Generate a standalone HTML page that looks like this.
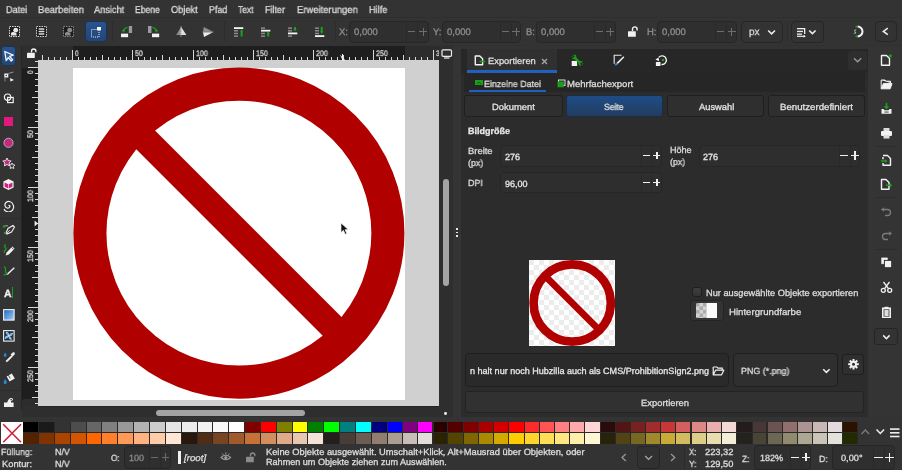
<!DOCTYPE html><html><head><meta charset="utf-8"><style>
html,body{margin:0;padding:0;}
body{text-rendering:geometricPrecision;width:902px;height:470px;overflow:hidden;position:relative;background:#333;font-family:"Liberation Sans",sans-serif;}
body>div,body>span,body>svg{position:absolute;}
span{white-space:pre;transform-origin:0 0;will-change:transform;-webkit-text-stroke:0.3px currentColor;}
</style></head><body>
<div style="left:0px;top:0px;width:902px;height:19px;background:#333333;"></div>
<span style="left:6.0px;top:6.00px;font-size:10px;line-height:10px;color:#dcdcdc;transform:scaleX(0.9142);">Datei</span>
<span style="left:37.9px;top:6.00px;font-size:10px;line-height:10px;color:#dcdcdc;transform:scaleX(0.9504);">Bearbeiten</span>
<span style="left:94.0px;top:6.00px;font-size:10px;line-height:10px;color:#dcdcdc;transform:scaleX(0.9207);">Ansicht</span>
<span style="left:134.9px;top:6.00px;font-size:10px;line-height:10px;color:#dcdcdc;transform:scaleX(0.8616);">Ebene</span>
<span style="left:171.2px;top:6.00px;font-size:10px;line-height:10px;color:#dcdcdc;transform:scaleX(0.9273);">Objekt</span>
<span style="left:209.0px;top:6.00px;font-size:10px;line-height:10px;color:#dcdcdc;transform:scaleX(0.8883);">Pfad</span>
<span style="left:238.3px;top:6.00px;font-size:10px;line-height:10px;color:#dcdcdc;transform:scaleX(0.8478);">Text</span>
<span style="left:265.2px;top:6.00px;font-size:10px;line-height:10px;color:#dcdcdc;transform:scaleX(0.8964);">Filter</span>
<span style="left:296.9px;top:6.00px;font-size:10px;line-height:10px;color:#dcdcdc;transform:scaleX(0.9442);">Erweiterungen</span>
<span style="left:368.8px;top:6.00px;font-size:10px;line-height:10px;color:#dcdcdc;transform:scaleX(0.9150);">Hilfe</span>
<div style="left:0px;top:19px;width:902px;height:26px;background:#333333;"></div>
<div style="left:0px;top:17px;width:902px;height:1px;background:#2f2f2f;"></div>
<div style="left:0px;top:45px;width:902px;height:1px;background:#313131;"></div>
<div style="left:0px;top:46px;width:21px;height:364px;background:#333333;"></div>
<div style="left:21px;top:46px;width:1px;height:364px;background:#262626;"></div>
<div style="left:22px;top:46px;width:15px;height:14px;background:#2e2e2e;"></div>
<div style="left:37px;top:46px;width:402px;height:14px;background:#2b2b2b;"></div>
<div style="left:72.5px;top:46px;width:332.5px;height:14px;background:#1d1d1d;"></div>
<div style="left:22px;top:60px;width:15px;height:346px;background:#2b2b2b;"></div>
<div style="left:22px;top:68px;width:15px;height:332px;background:#1d1d1d;"></div>
<div style="left:37px;top:60px;width:402px;height:346px;background:#d0d0d0;"></div>
<div style="left:72.8px;top:67.6px;width:332.5px;height:332px;background:#ffffff;"></div>
<svg style="left:37px;top:60px;" width="402" height="346" viewBox="0 0 402 346"><g transform="translate(201.9,173.15)"><circle r="149.0" fill="none" stroke="#b10000" stroke-width="33.1"/><rect x="-140" y="-13.25" width="280" height="26.5" fill="#b10000" transform="rotate(45) translate(-3.9,0)"/></g></svg>
<svg style="left:8.5px;top:25.8px;" width="11" height="11" viewBox="0 0 11 11"><rect x="0.5" y="0.5" width="10" height="10" fill="#1c1c1c" stroke="#e8e8e8" stroke-width="0.9" stroke-dasharray="1.6 0.9"/><circle cx="6.7" cy="4.2" r="2.4" fill="#e8e8e8"/><path d="M2 9.5 L2 7 Q3 5.6 5 6 L7.5 7.2 L7.5 9.5Z" fill="#e8e8e8"/></svg>
<svg style="left:36px;top:25.8px;" width="11" height="11" viewBox="0 0 11 11"><rect x="0.5" y="0.5" width="10" height="10" fill="#1c1c1c" stroke="#e0e0e0" stroke-width="0.9" stroke-dasharray="1.6 0.9"/><rect x="2.5" y="2.3" width="6" height="1.5" rx="0.7" fill="#ddd"/><rect x="2.5" y="4.8" width="6" height="1.5" rx="0.7" fill="#ddd"/><rect x="2.5" y="7.3" width="6" height="1.5" rx="0.7" fill="#ddd"/></svg>
<svg style="left:63px;top:25.8px;" width="11" height="11" viewBox="0 0 11 11"><rect x="0.5" y="0.5" width="10" height="10" fill="#1c1c1c" stroke="#8c8c8c" stroke-width="0.9" stroke-dasharray="1.6 0.9"/><circle cx="6.7" cy="4.2" r="2.4" fill="#8c8c8c"/><path d="M2 9.5 L2 7 Q3 5.6 5 6 L7.5 7.2 L7.5 9.5Z" fill="#8c8c8c"/></svg>
<div style="left:84.5px;top:21px;width:22.8px;height:21px;background:linear-gradient(#29548f,#224679);border-radius:3.5px;border:1px solid #1d3352;box-sizing:border-box;"></div>
<svg style="left:90px;top:26px;" width="13" height="12" viewBox="0 0 13 12"><rect x="1.5" y="3.5" width="7.5" height="7.5" fill="none" stroke="#e8e8e8" stroke-width="1" stroke-dasharray="1 1"/><rect x="7" y="1" width="4" height="3.4" fill="#fff"/></svg>
<div style="left:111.5px;top:21px;width:1px;height:21px;background:#2d2d2d;"></div>
<svg style="left:120px;top:25px;" width="13" height="13" viewBox="0 0 13 13"><rect x="8.8" y="1" width="3.3" height="7" fill="#9a9a9a"/><rect x="1" y="8.6" width="7.1" height="3.6" fill="#f2f2f2"/><path d="M7.7 2.4 Q4.5 2.8 3.5 5.6" fill="none" stroke="#1aa01a" stroke-width="1.4"/><path d="M1.8 5 L5.6 5.2 L3.2 7.4Z" fill="#1aa01a"/></svg>
<svg style="left:147px;top:25px;" width="13" height="13" viewBox="0 0 13 13"><rect x="1" y="1" width="3.5" height="7" fill="#9a9a9a"/><rect x="5" y="8.6" width="7.2" height="3.6" fill="#f2f2f2"/><path d="M5.3 2.4 Q8.5 2.8 9.5 5.6" fill="none" stroke="#1aa01a" stroke-width="1.4"/><path d="M11.2 5 L7.4 5.2 L9.8 7.4Z" fill="#1aa01a"/></svg>
<svg style="left:175px;top:26px;" width="13" height="12" viewBox="0 0 13 12"><path d="M1.2 9 L6 1 L6 9Z" fill="#8e8e8e"/><path d="M6.2 9 L6.2 1 L11.4 9Z" fill="#e0e0e0"/><path d="M6 0.5 V11" stroke="#fff" stroke-width="0.8" stroke-dasharray="1 0.8"/></svg>
<svg style="left:202px;top:26px;" width="13" height="12" viewBox="0 0 13 12"><path d="M1 5.8 L11 5.8 L1.8 1Z" fill="#8e8e8e"/><path d="M1 6.2 L11 6.2 L2 11Z" fill="#ededed"/><path d="M0.5 6 H11.5" stroke="#aaa" stroke-width="0.6"/></svg>
<div style="left:223.5px;top:21px;width:1px;height:21px;background:#2d2d2d;"></div>
<svg style="left:233.9px;top:26px;" width="11" height="11" viewBox="0 0 11 11"><rect x="0" y="1.2" width="9.3" height="1.8" fill="#f4f4f4"/><rect x="0" y="4.0" width="4" height="1.5" fill="#8a8a8a"/><rect x="0" y="6.7" width="4" height="1.5" fill="#8a8a8a"/><rect x="0" y="9.4" width="4" height="1.5" fill="#8a8a8a"/><path d="M7.6 3.4 L9.4 5.6 L8.6 5.6 L8.6 10.4 L6.6 10.4 L6.6 5.6 L5.8 5.6Z" fill="#1aa01a"/></svg>
<svg style="left:261px;top:26px;" width="11" height="11" viewBox="0 0 11 11"><rect x="0" y="1.4" width="4" height="1.5" fill="#8a8a8a"/><rect x="0" y="3.8" width="9.3" height="1.8" fill="#f4f4f4"/><rect x="0" y="6.7" width="4" height="1.5" fill="#8a8a8a"/><rect x="0" y="9.4" width="4" height="1.5" fill="#8a8a8a"/><path d="M7.2 5.6 L9.0 7.8 L8.2 7.8 L8.2 10.4 L6.2 10.4 L6.2 7.8 L5.4 7.8Z" fill="#1aa01a"/></svg>
<svg style="left:288.2px;top:26px;" width="11" height="11" viewBox="0 0 11 11"><rect x="0" y="1.4" width="4" height="1.5" fill="#8a8a8a"/><rect x="0" y="4.0" width="4" height="1.5" fill="#8a8a8a"/><rect x="0" y="6.5" width="9.3" height="1.8" fill="#f4f4f4"/><rect x="0" y="9.4" width="4" height="1.5" fill="#8a8a8a"/><path d="M7.0 5.2 L8.8 3.0 L8.0 3.0 L8.0 1 L6.0 1 L6.0 3.0 L5.2 3.0Z" fill="#1aa01a"/></svg>
<svg style="left:315.3px;top:26px;" width="11" height="11" viewBox="0 0 11 11"><rect x="0" y="1.4" width="4" height="1.5" fill="#8a8a8a"/><rect x="0" y="4.0" width="4" height="1.5" fill="#8a8a8a"/><rect x="0" y="6.7" width="4" height="1.5" fill="#8a8a8a"/><rect x="0" y="9.200000000000001" width="9.3" height="1.8" fill="#f4f4f4"/><path d="M6.7 7.8 L8.5 5.6 L7.7 5.6 L7.7 1 L5.7 1 L5.7 5.6 L4.9 5.6Z" fill="#1aa01a"/></svg>
<div style="left:334.7px;top:21px;width:1px;height:21px;background:#2d2d2d;"></div>
<span style="left:339.0px;top:28.00px;font-size:9.5px;line-height:9.5px;color:#8e8e8e;">X:</span>
<div style="left:348.8px;top:20.5px;width:80.2px;height:22.0px;background:#2f2f2f;border:1px solid #272727;box-sizing:border-box;border-radius:4px;"></div>
<div style="left:406.3px;top:21.5px;width:1px;height:20.0px;background:#2a2a2a;"></div>
<div style="left:417.3px;top:21.5px;width:1px;height:20.0px;background:#2a2a2a;"></div>
<span style="left:353.8px;top:28.00px;font-size:9.5px;line-height:9.5px;color:#8e8e8e;">0,000</span>
<div style="left:408.3px;top:31.2px;width:7.0px;height:1.0px;background:#6e6e6e;"></div>
<div style="left:419.15px;top:31.2px;width:8.0px;height:1.0px;background:#6e6e6e;"></div>
<div style="left:422.65px;top:27.6px;width:1.0px;height:8.2px;background:#6e6e6e;"></div>
<span style="left:432.8px;top:28.00px;font-size:9.5px;line-height:9.5px;color:#8e8e8e;">Y:</span>
<div style="left:442px;top:20.5px;width:79.4px;height:22.0px;background:#2f2f2f;border:1px solid #272727;box-sizing:border-box;border-radius:4px;"></div>
<div style="left:499.7px;top:21.5px;width:1px;height:20.0px;background:#2a2a2a;"></div>
<div style="left:510.6px;top:21.5px;width:1px;height:20.0px;background:#2a2a2a;"></div>
<span style="left:447.0px;top:28.00px;font-size:9.5px;line-height:9.5px;color:#8e8e8e;">0,000</span>
<div style="left:501.7px;top:31.2px;width:6.9px;height:1.0px;background:#6e6e6e;"></div>
<div style="left:512.0px;top:31.2px;width:8.0px;height:1.0px;background:#6e6e6e;"></div>
<div style="left:515.5px;top:27.6px;width:1.0px;height:8.2px;background:#6e6e6e;"></div>
<span style="left:526.0px;top:28.00px;font-size:9.5px;line-height:9.5px;color:#8e8e8e;">B:</span>
<div style="left:535.5px;top:20.5px;width:80.1px;height:22.0px;background:#2f2f2f;border:1px solid #272727;box-sizing:border-box;border-radius:4px;"></div>
<div style="left:594px;top:21.5px;width:1px;height:20.0px;background:#2a2a2a;"></div>
<div style="left:605px;top:21.5px;width:1px;height:20.0px;background:#2a2a2a;"></div>
<span style="left:540.5px;top:28.00px;font-size:9.5px;line-height:9.5px;color:#8e8e8e;">0,000</span>
<div style="left:596px;top:31.2px;width:7px;height:1.0px;background:#6e6e6e;"></div>
<div style="left:606.3px;top:31.2px;width:8.0px;height:1.0px;background:#6e6e6e;"></div>
<div style="left:609.8px;top:27.6px;width:1.0px;height:8.2px;background:#6e6e6e;"></div>
<svg style="left:627px;top:26px;" width="11" height="12" viewBox="0 0 11 12"><path d="M5.5 5 V3.2 A2.3 2.3 0 0 1 10.1 3.2 V4.4" fill="none" stroke="#f2f2f2" stroke-width="1.4"/><rect x="1" y="5.2" width="7.8" height="5.5" rx="0.5" fill="#f2f2f2"/></svg>
<span style="left:646.7px;top:28.00px;font-size:9.5px;line-height:9.5px;color:#8e8e8e;">H:</span>
<div style="left:657.3px;top:20.5px;width:80.2px;height:22.0px;background:#2f2f2f;border:1px solid #272727;box-sizing:border-box;border-radius:4px;"></div>
<div style="left:715px;top:21.5px;width:1px;height:20.0px;background:#2a2a2a;"></div>
<div style="left:726.2px;top:21.5px;width:1px;height:20.0px;background:#2a2a2a;"></div>
<span style="left:662.3px;top:28.00px;font-size:9.5px;line-height:9.5px;color:#8e8e8e;">0,000</span>
<div style="left:717px;top:31.2px;width:7.2px;height:1.0px;background:#6e6e6e;"></div>
<div style="left:727.85px;top:31.2px;width:8.0px;height:1.0px;background:#6e6e6e;"></div>
<div style="left:731.35px;top:27.6px;width:1.0px;height:8.2px;background:#6e6e6e;"></div>
<div style="left:741.3px;top:20.5px;width:41.5px;height:22.0px;background:#333;border:1px solid #262626;box-sizing:border-box;border-radius:4px;"></div>
<span style="left:748.7px;top:28.00px;font-size:10px;line-height:10px;color:#d8d8d8;">px</span>
<svg style="left:767px;top:29px;" width="10" height="7" viewBox="0 0 10 7"><path d="M1.2 1.5 L4.6 4.8 L8 1.5" fill="none" stroke="#eee" stroke-width="1.6"/></svg>
<div style="left:787px;top:21px;width:1px;height:21px;background:#2d2d2d;"></div>
<div style="left:790.7px;top:20.5px;width:33.3px;height:22.0px;background:#333;border:1px solid #262626;box-sizing:border-box;border-radius:4px;"></div>
<svg style="left:796px;top:27px;" width="11" height="11" viewBox="0 0 11 11"><rect x="1" y="1" width="7" height="1.3" fill="#eee"/><rect x="1" y="3.8" width="6" height="1.3" fill="#eee"/><rect x="1" y="6.5" width="5" height="1.3" fill="#eee"/><path d="M1 9.3 H8.8" stroke="#eee" stroke-width="1.2"/><path d="M7.6 7.8 L9.8 9.3 L7.6 10.8Z" fill="#eee"/><rect x="8" y="1" width="1.3" height="6" fill="#eee"/></svg>
<svg style="left:808px;top:29px;" width="10" height="7" viewBox="0 0 10 7"><path d="M1.2 1.5 L4.4 4.6 L7.6 1.5" fill="none" stroke="#eee" stroke-width="1.6"/></svg>
<svg style="left:851px;top:25px;" width="14" height="13" viewBox="0 0 14 13"><path d="M6.6 1.6 A4.9 4.9 0 1 1 6.6 11.4" fill="none" stroke="#f4f4f4" stroke-width="2"/><circle cx="5.4" cy="1.8" r="1" fill="#1aa01a"/><circle cx="5.4" cy="11.2" r="1" fill="#1aa01a"/><path d="M5.2 4.8 Q3.2 5 3.6 6.3 Q5 7 4.6 8.2 Q3.5 8.6 2.8 8" fill="none" stroke="#ccc" stroke-width="0.9"/></svg>
<div style="left:874.5px;top:20.5px;width:22.8px;height:21.9px;background:#333;border:1px solid #262626;box-sizing:border-box;border-radius:4px;"></div>
<svg style="left:881px;top:27px;" width="9" height="9" viewBox="0 0 9 9"><path d="M6.8 1.2 L2.4 4.4 L6.8 7.6" fill="none" stroke="#eee" stroke-width="1.6"/></svg>
<div style="left:1.4px;top:45.7px;width:14.7px;height:20.4px;background:linear-gradient(#29548f,#224679);border-radius:3.5px;border:1px solid #1d3352;box-sizing:border-box;"></div>
<svg style="left:3px;top:50px;" width="12" height="12" viewBox="0 0 12 12"><path d="M1.8 1.5 L10.2 5.2 L6.6 6.4 L9.6 9.8 L8.2 11 L5.3 7.6 L3.2 10.6Z" fill="#2a5fa8" stroke="#f4f4f4" stroke-width="1.3" stroke-linejoin="round"/></svg>
<svg style="left:3px;top:71px;" width="12" height="12" viewBox="0 0 12 12"><rect x="1.3" y="2.5" width="4" height="4" fill="#f0f0f0"/><rect x="2.7" y="3.9" width="1.2" height="1.2" fill="#333"/><path d="M5.3 2.5 L10.5 1" stroke="#aaa" stroke-width="0.8"/><path d="M2 6.5 V10.5" stroke="#999" stroke-width="0.8"/><path d="M7 7 L11 9 L7.4 10.6Z" fill="#f0f0f0"/></svg>
<svg style="left:3px;top:92px;" width="12" height="12" viewBox="0 0 12 12"><circle cx="4.6" cy="5.2" r="3.2" fill="none" stroke="#f0f0f0" stroke-width="1.2"/><rect x="4.6" y="5.4" width="5.6" height="5.2" fill="none" stroke="#f0f0f0" stroke-width="1.2"/></svg>
<div style="left:3.8px;top:116.8px;width:9.0px;height:9.2px;background:#e0197d;"></div>
<svg style="left:3px;top:137px;" width="12" height="12" viewBox="0 0 12 12"><circle cx="5.5" cy="5.8" r="4.6" fill="#c02a80" stroke="#e8e8e8" stroke-width="0.6"/></svg>
<svg style="left:2px;top:157px;" width="14" height="13" viewBox="0 0 14 13"><path d="M5 1 L6.3 3.6 L9.2 4 L7.1 6 L7.6 8.9 L5 7.5 L2.4 8.9 L2.9 6 L0.8 4 L3.7 3.6Z" fill="#c02a80" stroke="#eee" stroke-width="0.9"/><path d="M10 6 L10.9 7.8 L12.9 8.1 L11.4 9.5 L11.8 11.5 L10 10.6 L8.2 11.5 L8.6 9.5 L7.1 8.1 L9.1 7.8Z" fill="#333" stroke="#eee" stroke-width="0.9"/></svg>
<svg style="left:2px;top:178px;" width="13" height="13" viewBox="0 0 13 13"><path d="M6.5 1 L11.6 3.6 L11.6 9.4 L6.5 12 L1.4 9.4 L1.4 3.6Z" fill="#f2f2f2"/><path d="M2.6 4.4 L6.2 6.2 L6.2 10.6 L2.6 8.8Z" fill="#e0197d"/><path d="M10.4 4.4 L6.8 6.2 L6.8 10.6 L10.4 8.8Z" fill="#c02a80"/></svg>
<svg style="left:2px;top:199px;" width="13" height="13" viewBox="0 0 13 13"><path d="M6.5 6.5 A1.2 1.2 0 0 1 8 7 A2.2 2.2 0 0 1 5 9 A3.3 3.3 0 0 1 4 3.5 A4.5 4.5 0 0 1 11.2 6 A5 5 0 0 1 2 10" fill="none" stroke="#eee" stroke-width="1.2"/></svg>
<div style="left:0px;top:218px;width:21px;height:1px;background:#2d2d2d;"></div>
<svg style="left:2px;top:223px;" width="14" height="13" viewBox="0 0 14 13"><path d="M4 10 L6 5.5 L11 2.5 L12.5 4 L9.5 9 L5 11Z" fill="none" stroke="#eee" stroke-width="1.1"/><path d="M4.5 10.5 L8 7" stroke="#eee" stroke-width="0.8"/><path d="M2 3.5 Q4 2 6 3" fill="none" stroke="#bbb" stroke-width="0.8"/><circle cx="2" cy="3.5" r="1.2" fill="#1aa01a"/><circle cx="3" cy="10" r="1.2" fill="#1aa01a"/></svg>
<svg style="left:2px;top:243px;" width="14" height="13" viewBox="0 0 14 13"><path d="M4.6 9.4 L10.4 3.6 L12.6 5.8 L6.8 11.6 L3.6 12.6Z" fill="#f0f0f0"/><path d="M9.6 4.4 L11.8 6.6" stroke="#333" stroke-width="0.8"/><path d="M3.6 1.5 Q1.6 3.2 3.4 4.6 Q5 6 2.6 7.6 Q1.6 8.6 2.6 9.8" fill="none" stroke="#1aa01a" stroke-width="1.3"/></svg>
<svg style="left:2px;top:264px;" width="14" height="13" viewBox="0 0 14 13"><path d="M5.2 9.6 L11.8 3.2 L12.8 4.2 L6.2 10.6Z" fill="#eee"/><path d="M4.2 11 L5.2 9.6 L6.2 10.6Z" fill="#eee"/><path d="M2.2 2.4 Q4.4 4.4 3.6 6.6 Q2.8 8.6 5 9.4" fill="none" stroke="#1aa01a" stroke-width="1.3"/><path d="M1.6 11.2 L4.4 10.2" stroke="#1aa01a" stroke-width="1.3"/></svg>
<span style="left:3.5px;top:289.00px;font-size:10.5px;line-height:10.5px;color:#f2f2f2;font-weight:bold;transform:scaleX(0.9868);">A</span>
<div style="left:12px;top:287px;width:1.4px;height:11px;background:#1aa01a;"></div>
<svg style="left:3px;top:309px;" width="12" height="12" viewBox="0 0 12 12"><defs><linearGradient id="g1" x1="0" y1="0" x2="1" y2="1"><stop offset="0" stop-color="#1e63b8"/><stop offset="1" stop-color="#9fd0ff"/></linearGradient></defs><rect x="0.6" y="0.6" width="10.5" height="10.5" fill="url(#g1)" stroke="#f0f0f0" stroke-width="1.1"/></svg>
<svg style="left:3px;top:330px;" width="12" height="12" viewBox="0 0 12 12"><rect x="0.6" y="0.6" width="10.5" height="10.5" fill="#243444" stroke="#f0f0f0" stroke-width="1.1"/><path d="M5.8 5.8 Q3 4.5 3.2 2 Q6 2.2 5.8 5.8 Q7.2 3 9.6 3.2 Q9.6 6 5.8 5.8 Q8.6 7.2 8.4 9.6 Q5.6 9.6 5.8 5.8 Q4.4 8.6 2 8.4 Q2 5.6 5.8 5.8Z" fill="#3a9ae8" stroke="#e8f4ff" stroke-width="0.6"/></svg>
<svg style="left:2px;top:351px;" width="14" height="13" viewBox="0 0 14 13"><path d="M3.8 11.2 L4.4 9.2 L9.4 4.2 L10.8 5.6 L5.8 10.6Z" fill="#f0f0f0"/><path d="M8.6 3.4 L10.6 1.4 Q11.8 0.8 12.6 1.6 Q13.2 2.4 12.6 3.4 L10.6 5.4Z" fill="#f0f0f0"/><path d="M3.2 1.6 Q1.2 4.2 2 5.2 Q3.2 6.2 4.4 5.2 Q5 4.2 3.2 1.6Z" fill="#1e8fe0"/></svg>
<svg style="left:2px;top:372px;" width="14" height="13" viewBox="0 0 14 13"><path d="M4.6 4.4 L9.8 1.6 L12.8 6.6 L7.6 9.6Z" fill="#f2f2f2"/><path d="M6.4 3.2 L8.2 6.4" stroke="#333" stroke-width="0.9"/><path d="M3.2 7 Q0.9 10 2 11.4 Q3.2 12.4 4.4 11.4 Q5.4 10 3.2 7Z" fill="#1e8fe0"/></svg>
<div style="left:0px;top:390px;width:21px;height:1px;background:#2d2d2d;"></div>
<svg style="left:3px;top:396px;" width="12" height="12" viewBox="0 0 12 12"><path d="M1 6.5 L4.2 6.5 Q5.5 2 8.2 2 Q10.5 2.2 10 4 L8 5 L8 6.5 L10.6 6.5 L10.6 11 L1 11Z" fill="#f0f0f0"/><path d="M7.2 3.8 L9 3.4" stroke="#333" stroke-width="0.9"/></svg>
<div style="left:22px;top:46px;width:15.5px;height:14px;background:#2e2e2e;"></div>
<svg style="left:26px;top:47.5px;" width="11" height="11" viewBox="0 0 11 11"><path d="M5.5 4.5 V3.2 A2.2 2.2 0 0 1 9.9 3.2 V4.2" fill="none" stroke="#f2f2f2" stroke-width="1.3"/><rect x="1" y="4.8" width="7.8" height="5.2" rx="0.4" fill="#f2f2f2"/></svg>
<div style="left:37.5px;top:46px;width:401.5px;height:14px;background:#2c2c2c;"></div>
<div style="left:72.5px;top:46px;width:332.5px;height:14px;background:#1e1e1e;"></div>
<div style="left:22.5px;top:60px;width:15px;height:346px;background:#2c2c2c;"></div>
<div style="left:22.5px;top:67.5px;width:15px;height:331.5px;background:#1e1e1e;"></div>
<div style="left:42.0px;top:54.5px;width:1px;height:5.5px;background:#d8d8d8;"></div>
<div style="left:48.0px;top:57px;width:1px;height:3px;background:#d8d8d8;"></div>
<div style="left:54.0px;top:57px;width:1px;height:3px;background:#d8d8d8;"></div>
<div style="left:60.0px;top:57px;width:1px;height:3px;background:#d8d8d8;"></div>
<div style="left:66.0px;top:57px;width:1px;height:3px;background:#d8d8d8;"></div>
<div style="left:72.0px;top:50px;width:1px;height:10px;background:#d8d8d8;"></div>
<span style="left:74.5px;top:50.00px;font-size:8px;line-height:8px;color:#d8d8d8;transform:scaleX(0.8044);">0</span>
<div style="left:78.0px;top:57px;width:1px;height:3px;background:#d8d8d8;"></div>
<div style="left:84.0px;top:57px;width:1px;height:3px;background:#d8d8d8;"></div>
<div style="left:90.0px;top:57px;width:1px;height:3px;background:#d8d8d8;"></div>
<div style="left:96.0px;top:57px;width:1px;height:3px;background:#d8d8d8;"></div>
<div style="left:102.0px;top:54.5px;width:1px;height:5.5px;background:#d8d8d8;"></div>
<div style="left:108.0px;top:57px;width:1px;height:3px;background:#d8d8d8;"></div>
<div style="left:114.0px;top:57px;width:1px;height:3px;background:#d8d8d8;"></div>
<div style="left:120.0px;top:57px;width:1px;height:3px;background:#d8d8d8;"></div>
<div style="left:126.0px;top:57px;width:1px;height:3px;background:#d8d8d8;"></div>
<div style="left:132.0px;top:50px;width:1px;height:10px;background:#d8d8d8;"></div>
<span style="left:134.5px;top:50.00px;font-size:8px;line-height:8px;color:#d8d8d8;transform:scaleX(0.8640);">50</span>
<div style="left:138.0px;top:57px;width:1px;height:3px;background:#d8d8d8;"></div>
<div style="left:144.0px;top:57px;width:1px;height:3px;background:#d8d8d8;"></div>
<div style="left:150.0px;top:57px;width:1px;height:3px;background:#d8d8d8;"></div>
<div style="left:156.0px;top:57px;width:1px;height:3px;background:#d8d8d8;"></div>
<div style="left:162.0px;top:54.5px;width:1px;height:5.5px;background:#d8d8d8;"></div>
<div style="left:169.0px;top:57px;width:1px;height:3px;background:#d8d8d8;"></div>
<div style="left:175.0px;top:57px;width:1px;height:3px;background:#d8d8d8;"></div>
<div style="left:181.0px;top:57px;width:1px;height:3px;background:#d8d8d8;"></div>
<div style="left:187.0px;top:57px;width:1px;height:3px;background:#d8d8d8;"></div>
<div style="left:193.0px;top:50px;width:1px;height:10px;background:#d8d8d8;"></div>
<span style="left:195.5px;top:50.00px;font-size:8px;line-height:8px;color:#d8d8d8;transform:scaleX(0.8776);">100</span>
<div style="left:199.0px;top:57px;width:1px;height:3px;background:#d8d8d8;"></div>
<div style="left:205.0px;top:57px;width:1px;height:3px;background:#d8d8d8;"></div>
<div style="left:211.0px;top:57px;width:1px;height:3px;background:#d8d8d8;"></div>
<div style="left:217.0px;top:57px;width:1px;height:3px;background:#d8d8d8;"></div>
<div style="left:223.0px;top:54.5px;width:1px;height:5.5px;background:#d8d8d8;"></div>
<div style="left:229.0px;top:57px;width:1px;height:3px;background:#d8d8d8;"></div>
<div style="left:235.0px;top:57px;width:1px;height:3px;background:#d8d8d8;"></div>
<div style="left:241.0px;top:57px;width:1px;height:3px;background:#d8d8d8;"></div>
<div style="left:247.0px;top:57px;width:1px;height:3px;background:#d8d8d8;"></div>
<div style="left:253.0px;top:50px;width:1px;height:10px;background:#d8d8d8;"></div>
<span style="left:255.5px;top:50.00px;font-size:8px;line-height:8px;color:#d8d8d8;transform:scaleX(0.8776);">150</span>
<div style="left:259.0px;top:57px;width:1px;height:3px;background:#d8d8d8;"></div>
<div style="left:265.0px;top:57px;width:1px;height:3px;background:#d8d8d8;"></div>
<div style="left:271.0px;top:57px;width:1px;height:3px;background:#d8d8d8;"></div>
<div style="left:277.0px;top:57px;width:1px;height:3px;background:#d8d8d8;"></div>
<div style="left:283.0px;top:54.5px;width:1px;height:5.5px;background:#d8d8d8;"></div>
<div style="left:289.0px;top:57px;width:1px;height:3px;background:#d8d8d8;"></div>
<div style="left:295.0px;top:57px;width:1px;height:3px;background:#d8d8d8;"></div>
<div style="left:301.0px;top:57px;width:1px;height:3px;background:#d8d8d8;"></div>
<div style="left:307.0px;top:57px;width:1px;height:3px;background:#d8d8d8;"></div>
<div style="left:313.0px;top:50px;width:1px;height:10px;background:#d8d8d8;"></div>
<span style="left:315.5px;top:50.00px;font-size:8px;line-height:8px;color:#d8d8d8;transform:scaleX(0.8776);">200</span>
<div style="left:319.0px;top:57px;width:1px;height:3px;background:#d8d8d8;"></div>
<div style="left:325.0px;top:57px;width:1px;height:3px;background:#d8d8d8;"></div>
<div style="left:331.0px;top:57px;width:1px;height:3px;background:#d8d8d8;"></div>
<div style="left:337.0px;top:57px;width:1px;height:3px;background:#d8d8d8;"></div>
<div style="left:343.0px;top:54.5px;width:1px;height:5.5px;background:#d8d8d8;"></div>
<div style="left:349.0px;top:57px;width:1px;height:3px;background:#d8d8d8;"></div>
<div style="left:355.0px;top:57px;width:1px;height:3px;background:#d8d8d8;"></div>
<div style="left:361.0px;top:57px;width:1px;height:3px;background:#d8d8d8;"></div>
<div style="left:367.0px;top:57px;width:1px;height:3px;background:#d8d8d8;"></div>
<div style="left:373.0px;top:50px;width:1px;height:10px;background:#d8d8d8;"></div>
<span style="left:375.5px;top:50.00px;font-size:8px;line-height:8px;color:#d8d8d8;transform:scaleX(0.8776);">250</span>
<div style="left:379.0px;top:57px;width:1px;height:3px;background:#d8d8d8;"></div>
<div style="left:385.0px;top:57px;width:1px;height:3px;background:#d8d8d8;"></div>
<div style="left:391.0px;top:57px;width:1px;height:3px;background:#d8d8d8;"></div>
<div style="left:397.0px;top:57px;width:1px;height:3px;background:#d8d8d8;"></div>
<div style="left:403.0px;top:54.5px;width:1px;height:5.5px;background:#d8d8d8;"></div>
<div style="left:409.0px;top:57px;width:1px;height:3px;background:#d8d8d8;"></div>
<div style="left:415.0px;top:57px;width:1px;height:3px;background:#d8d8d8;"></div>
<div style="left:421.0px;top:57px;width:1px;height:3px;background:#d8d8d8;"></div>
<div style="left:427.0px;top:57px;width:1px;height:3px;background:#d8d8d8;"></div>
<div style="left:433.0px;top:50px;width:1px;height:10px;background:#d8d8d8;"></div>
<span style="left:435.5px;top:50.00px;font-size:8px;line-height:8px;color:#d8d8d8;transform:scaleX(0.8044);">3</span>
<div style="left:34.5px;top:61.0px;width:3px;height:1px;background:#d8d8d8;"></div>
<div style="left:27.5px;top:67.0px;width:10px;height:1px;background:#d8d8d8;"></div>
<span style="left:27.4px;top:73.52px;font-size:8px;line-height:8px;color:#d8d8d8;transform:rotate(-90deg) scaleX(0.8044);transform-origin:0 0;">0</span>
<div style="left:34.5px;top:73.0px;width:3px;height:1px;background:#d8d8d8;"></div>
<div style="left:34.5px;top:79.0px;width:3px;height:1px;background:#d8d8d8;"></div>
<div style="left:34.5px;top:85.0px;width:3px;height:1px;background:#d8d8d8;"></div>
<div style="left:34.5px;top:91.0px;width:3px;height:1px;background:#d8d8d8;"></div>
<div style="left:31.5px;top:97.0px;width:6px;height:1px;background:#d8d8d8;"></div>
<div style="left:34.5px;top:103.0px;width:3px;height:1px;background:#d8d8d8;"></div>
<div style="left:34.5px;top:109.0px;width:3px;height:1px;background:#d8d8d8;"></div>
<div style="left:34.5px;top:115.0px;width:3px;height:1px;background:#d8d8d8;"></div>
<div style="left:34.5px;top:121.0px;width:3px;height:1px;background:#d8d8d8;"></div>
<div style="left:27.5px;top:127.0px;width:10px;height:1px;background:#d8d8d8;"></div>
<span style="left:27.4px;top:137.59px;font-size:8px;line-height:8px;color:#d8d8d8;transform:rotate(-90deg) scaleX(0.8640);transform-origin:0 0;">50</span>
<div style="left:34.5px;top:133.0px;width:3px;height:1px;background:#d8d8d8;"></div>
<div style="left:34.5px;top:139.0px;width:3px;height:1px;background:#d8d8d8;"></div>
<div style="left:34.5px;top:145.0px;width:3px;height:1px;background:#d8d8d8;"></div>
<div style="left:34.5px;top:151.0px;width:3px;height:1px;background:#d8d8d8;"></div>
<div style="left:31.5px;top:157.0px;width:6px;height:1px;background:#d8d8d8;"></div>
<div style="left:34.5px;top:163.0px;width:3px;height:1px;background:#d8d8d8;"></div>
<div style="left:34.5px;top:169.0px;width:3px;height:1px;background:#d8d8d8;"></div>
<div style="left:34.5px;top:175.0px;width:3px;height:1px;background:#d8d8d8;"></div>
<div style="left:34.5px;top:181.0px;width:3px;height:1px;background:#d8d8d8;"></div>
<div style="left:27.5px;top:187.0px;width:10px;height:1px;background:#d8d8d8;"></div>
<span style="left:27.4px;top:201.66px;font-size:8px;line-height:8px;color:#d8d8d8;transform:rotate(-90deg) scaleX(0.8776);transform-origin:0 0;">100</span>
<div style="left:34.5px;top:193.0px;width:3px;height:1px;background:#d8d8d8;"></div>
<div style="left:34.5px;top:199.0px;width:3px;height:1px;background:#d8d8d8;"></div>
<div style="left:34.5px;top:205.0px;width:3px;height:1px;background:#d8d8d8;"></div>
<div style="left:34.5px;top:211.0px;width:3px;height:1px;background:#d8d8d8;"></div>
<div style="left:31.5px;top:217.0px;width:6px;height:1px;background:#d8d8d8;"></div>
<div style="left:34.5px;top:223.0px;width:3px;height:1px;background:#d8d8d8;"></div>
<div style="left:34.5px;top:229.0px;width:3px;height:1px;background:#d8d8d8;"></div>
<div style="left:34.5px;top:235.0px;width:3px;height:1px;background:#d8d8d8;"></div>
<div style="left:34.5px;top:241.0px;width:3px;height:1px;background:#d8d8d8;"></div>
<div style="left:27.5px;top:247.0px;width:10px;height:1px;background:#d8d8d8;"></div>
<span style="left:27.4px;top:261.66px;font-size:8px;line-height:8px;color:#d8d8d8;transform:rotate(-90deg) scaleX(0.8776);transform-origin:0 0;">150</span>
<div style="left:34.5px;top:253.0px;width:3px;height:1px;background:#d8d8d8;"></div>
<div style="left:34.5px;top:259.0px;width:3px;height:1px;background:#d8d8d8;"></div>
<div style="left:34.5px;top:265.0px;width:3px;height:1px;background:#d8d8d8;"></div>
<div style="left:34.5px;top:271.0px;width:3px;height:1px;background:#d8d8d8;"></div>
<div style="left:31.5px;top:277.0px;width:6px;height:1px;background:#d8d8d8;"></div>
<div style="left:34.5px;top:283.0px;width:3px;height:1px;background:#d8d8d8;"></div>
<div style="left:34.5px;top:289.0px;width:3px;height:1px;background:#d8d8d8;"></div>
<div style="left:34.5px;top:295.0px;width:3px;height:1px;background:#d8d8d8;"></div>
<div style="left:34.5px;top:301.0px;width:3px;height:1px;background:#d8d8d8;"></div>
<div style="left:27.5px;top:307.0px;width:10px;height:1px;background:#d8d8d8;"></div>
<span style="left:27.4px;top:321.66px;font-size:8px;line-height:8px;color:#d8d8d8;transform:rotate(-90deg) scaleX(0.8776);transform-origin:0 0;">200</span>
<div style="left:34.5px;top:313.0px;width:3px;height:1px;background:#d8d8d8;"></div>
<div style="left:34.5px;top:319.0px;width:3px;height:1px;background:#d8d8d8;"></div>
<div style="left:34.5px;top:325.0px;width:3px;height:1px;background:#d8d8d8;"></div>
<div style="left:34.5px;top:331.0px;width:3px;height:1px;background:#d8d8d8;"></div>
<div style="left:31.5px;top:337.0px;width:6px;height:1px;background:#d8d8d8;"></div>
<div style="left:34.5px;top:343.0px;width:3px;height:1px;background:#d8d8d8;"></div>
<div style="left:34.5px;top:349.0px;width:3px;height:1px;background:#d8d8d8;"></div>
<div style="left:34.5px;top:355.0px;width:3px;height:1px;background:#d8d8d8;"></div>
<div style="left:34.5px;top:361.0px;width:3px;height:1px;background:#d8d8d8;"></div>
<div style="left:27.5px;top:367.0px;width:10px;height:1px;background:#d8d8d8;"></div>
<span style="left:27.4px;top:381.66px;font-size:8px;line-height:8px;color:#d8d8d8;transform:rotate(-90deg) scaleX(0.8776);transform-origin:0 0;">250</span>
<div style="left:34.5px;top:373.0px;width:3px;height:1px;background:#d8d8d8;"></div>
<div style="left:34.5px;top:379.0px;width:3px;height:1px;background:#d8d8d8;"></div>
<div style="left:34.5px;top:385.0px;width:3px;height:1px;background:#d8d8d8;"></div>
<div style="left:34.5px;top:391.0px;width:3px;height:1px;background:#d8d8d8;"></div>
<div style="left:31.5px;top:397.0px;width:6px;height:1px;background:#d8d8d8;"></div>
<div style="left:34.5px;top:403.0px;width:3px;height:1px;background:#d8d8d8;"></div>
<div style="left:439px;top:46px;width:13.6px;height:375px;background:#2e2e2e;"></div>
<div style="left:22px;top:405.8px;width:430.6px;height:15.2px;background:#2e2e2e;"></div>
<div style="left:37.5px;top:405.8px;width:401.4px;height:1.0px;background:#252525;"></div>
<div style="left:452.6px;top:46px;width:8.7px;height:375px;background:#343434;"></div>
<div style="left:456.2px;top:228.4px;width:1.6px;height:1.8px;background:#e6e6e6;"></div>
<div style="left:456.2px;top:231.7px;width:1.6px;height:1.8px;background:#e6e6e6;"></div>
<div style="left:456.2px;top:235.0px;width:1.6px;height:1.8px;background:#e6e6e6;"></div>
<div style="left:461.3px;top:49px;width:406.5px;height:368px;background:#2c2c2c;"></div>
<div style="left:461.3px;top:49px;width:406.5px;height:24px;background:#272727;"></div>
<div style="left:466.6px;top:49px;width:90.4px;height:24px;background:#303030;"></div>
<div style="left:466.9px;top:70.4px;width:90.1px;height:2.6px;background:#2160bd;"></div>
<svg style="left:474px;top:55px;" width="12" height="11" viewBox="0 0 12 11"><path d="M1.3 1 H5.8 L8.6 3.8 V9.8 H1.3Z" fill="none" stroke="#f2f2f2" stroke-width="1.4" stroke-linejoin="round"/><path d="M5.5 6.5 H10" stroke="#1aa01a" stroke-width="1.5"/><path d="M9 4.6 L11.4 6.5 L9 8.4Z" fill="#1aa01a"/></svg>
<span style="left:488.2px;top:57.00px;font-size:9px;line-height:9px;color:#dcdcdc;transform:scaleX(1.0391);">Exportieren</span>
<svg style="left:540.5px;top:57.5px;" width="7" height="7" viewBox="0 0 7 7"><path d="M1 1 L6 6 M6 1 L1 6" stroke="#a8a8a8" stroke-width="1.3"/></svg>
<svg style="left:570px;top:54px;" width="14" height="13" viewBox="0 0 14 13"><rect x="1.7" y="6.9" width="5.4" height="5.1" fill="#f2f2f2"/><path d="M4.4 3.4 L10.4 9" stroke="#1aa01a" stroke-width="2.2"/><circle cx="4" cy="2.9" r="2.4" fill="#1aa01a"/><circle cx="10.8" cy="9.4" r="2.4" fill="#1aa01a"/><path d="M2.2 0.2 L3.8 2.6 L1 4.2" fill="none" stroke="#282828" stroke-width="1.4"/><path d="M12.8 12 L11 9.6 L13.8 8" fill="none" stroke="#282828" stroke-width="1.4"/></svg>
<svg style="left:612px;top:54px;" width="14" height="13" viewBox="0 0 14 13"><path d="M2.2 9.8 V1.3 H9.5" fill="none" stroke="#e8e8e8" stroke-width="1.1"/><path d="M4.6 8.8 L11.4 2.2 L12.4 3.2 L5.8 10Z" fill="#eee"/><path d="M2.6 11.6 Q2.8 9.4 4.4 8.8 L5.9 10.2 Q5 11.8 2.6 11.6Z" fill="#2a8ae0"/></svg>
<svg style="left:654px;top:54px;" width="14" height="13" viewBox="0 0 14 13"><path d="M4.8 3.4 A4.3 4.3 0 1 1 7.4 10.4" fill="none" stroke="#f2f2f2" stroke-width="1.4"/><path d="M1.4 5.6 L4.6 3.6 L5.2 7.2Z" fill="#f2f2f2"/><circle cx="9" cy="6" r="1.3" fill="#1aa01a"/><rect x="1.9" y="8" width="4.6" height="4" fill="#f2f2f2"/></svg>
<div style="left:848.3px;top:51.3px;width:19.1px;height:18.7px;background:#2e2e2e;border-radius:3px;"></div>
<svg style="left:853px;top:57px;" width="10" height="7" viewBox="0 0 10 7"><path d="M1 1.2 L4.6 4.8 L8.2 1.2" fill="none" stroke="#9a9a9a" stroke-width="1.3"/></svg>
<div style="left:464px;top:73px;width:401px;height:18.7px;background:#262626;"></div>
<div style="left:475px;top:80.1px;width:7.6px;height:4.8px;background:#18a018;"></div>
<svg style="left:475px;top:80px;" width="8" height="5" viewBox="0 0 8 5"><path d="M2 4 L4 2 L6 4" fill="none" stroke="#0b5a0b" stroke-width="0.9"/></svg>
<span style="left:484.4px;top:80.00px;font-size:9px;line-height:9px;color:#dcdcdc;transform:scaleX(0.9810);">Einzelne Datei</span>
<div style="left:469px;top:89.8px;width:77px;height:2.4px;background:#2160bd;"></div>
<svg style="left:557px;top:78.5px;" width="9" height="9" viewBox="0 0 9 9"><rect x="1.5" y="1" width="6.5" height="5.5" fill="none" stroke="#eee" stroke-width="0.9"/><rect x="0.5" y="2.5" width="6.3" height="5.8" fill="#18a018"/></svg>
<span style="left:566.8px;top:80.00px;font-size:9px;line-height:9px;color:#dcdcdc;transform:scaleX(1.0592);">Mehrfachexport</span>
<div style="left:464.4px;top:95.4px;width:98.2px;height:22.0px;background:#2f2f2f;border:1px solid #1f1f1f;box-sizing:border-box;border-radius:3px;"></div>
<span style="left:491.7px;top:103.00px;font-size:9px;line-height:9px;color:#e0e0e0;transform:scaleX(1.0439);">Dokument</span>
<div style="left:565.9px;top:95.4px;width:97.3px;height:22.0px;background:linear-gradient(#1e4c86,#223d5f);border:1px solid #1a2d45;box-sizing:border-box;border-radius:3px;"></div>
<span style="left:604.3px;top:103.00px;font-size:9px;line-height:9px;color:#e0e0e0;transform:scaleX(0.9561);">Seite</span>
<div style="left:666.5px;top:95.4px;width:97.5px;height:22.0px;background:#2f2f2f;border:1px solid #1f1f1f;box-sizing:border-box;border-radius:3px;"></div>
<span style="left:698.5px;top:103.00px;font-size:9px;line-height:9px;color:#e0e0e0;transform:scaleX(1.0382);">Auswahl</span>
<div style="left:767.5px;top:95.4px;width:97.0px;height:22.0px;background:#2f2f2f;border:1px solid #1f1f1f;box-sizing:border-box;border-radius:3px;"></div>
<span style="left:780.0px;top:103.00px;font-size:9px;line-height:9px;color:#e0e0e0;transform:scaleX(1.0735);">Benutzerdefiniert</span>
<span style="left:468.3px;top:127.00px;font-size:9px;line-height:9px;color:#e6e6e6;font-weight:bold;transform:scaleX(1.0024);">Bildgröße</span>
<span style="left:468.3px;top:147.00px;font-size:9px;line-height:9px;color:#dcdcdc;transform:scaleX(1.0468);">Breite</span>
<span style="left:468.3px;top:159.00px;font-size:9px;line-height:9px;color:#dcdcdc;transform:scaleX(0.9806);">(px)</span>
<div style="left:500.1px;top:144.5px;width:162.3px;height:22.1px;background:#2e2e2e;border:1px solid #262626;box-sizing:border-box;border-radius:4px;"></div>
<div style="left:641.2px;top:145.5px;width:1px;height:20.099999999999994px;background:#292929;"></div>
<div style="left:651.4px;top:145.5px;width:1px;height:20.099999999999994px;background:#292929;"></div>
<span style="left:504.6px;top:153.00px;font-size:9px;line-height:9px;color:#e8e8e8;">276</span>
<div style="left:642.7px;top:154.75px;width:7.2px;height:1.6px;background:#f0f0f0;"></div>
<div style="left:653.3px;top:154.75px;width:7.2px;height:1.6px;background:#f0f0f0;"></div>
<div style="left:656.1px;top:151.95000000000005px;width:1.6px;height:7.2px;background:#f0f0f0;"></div>
<span style="left:669.7px;top:146.00px;font-size:9px;line-height:9px;color:#dcdcdc;transform:scaleX(1.0047);">Höhe</span>
<span style="left:669.7px;top:158.00px;font-size:9px;line-height:9px;color:#dcdcdc;transform:scaleX(0.9742);">(px)</span>
<div style="left:698.8px;top:144.5px;width:161.5px;height:22.0px;background:#2e2e2e;border:1px solid #262626;box-sizing:border-box;border-radius:4px;"></div>
<div style="left:838.7px;top:145.5px;width:1px;height:20.0px;background:#292929;"></div>
<div style="left:849.8px;top:145.5px;width:1px;height:20.0px;background:#292929;"></div>
<span style="left:703.4px;top:153.00px;font-size:9px;line-height:9px;color:#e8e8e8;">276</span>
<div style="left:840.2px;top:154.7px;width:8.1px;height:1.6px;background:#f0f0f0;"></div>
<div style="left:851.0px;top:154.7px;width:8.1px;height:1.6px;background:#f0f0f0;"></div>
<div style="left:854.25px;top:151.45000000000005px;width:1.6px;height:8.1px;background:#f0f0f0;"></div>
<span style="left:468.3px;top:179.00px;font-size:9px;line-height:9px;color:#dcdcdc;transform:scaleX(0.9800);">DPI</span>
<div style="left:500.1px;top:172px;width:162.3px;height:21.3px;background:#2e2e2e;border:1px solid #262626;box-sizing:border-box;border-radius:4px;"></div>
<div style="left:641.2px;top:173px;width:1px;height:19.30000000000001px;background:#292929;"></div>
<div style="left:651.4px;top:173px;width:1px;height:19.30000000000001px;background:#292929;"></div>
<span style="left:504.6px;top:180.00px;font-size:9px;line-height:9px;color:#e8e8e8;">96,00</span>
<div style="left:642.7px;top:181.85px;width:7.2px;height:1.6px;background:#f0f0f0;"></div>
<div style="left:653.3px;top:181.85px;width:7.2px;height:1.6px;background:#f0f0f0;"></div>
<div style="left:656.1px;top:179.05000000000004px;width:1.6px;height:7.2px;background:#f0f0f0;"></div>
<svg style="left:528.9px;top:260px;" width="86.4" height="86" viewBox="0 0 86.4 86"><defs><pattern id="ck" width="10" height="10" patternUnits="userSpaceOnUse"><rect width="10" height="10" fill="#ffffff"/><rect width="5" height="5" fill="#ececec"/><rect x="5" y="5" width="5" height="5" fill="#ececec"/></pattern></defs><rect width="86.4" height="86" fill="url(#ck)"/><g transform="translate(43.2,43)"><circle r="38.6" fill="none" stroke="#b00000" stroke-width="8.6"/><rect x="-38" y="-3.45" width="76" height="6.9" fill="#b00000" transform="rotate(45)"/></g></svg>
<div style="left:692.2px;top:286.5px;width:10.2px;height:10.3px;background:linear-gradient(#3e3e3e,#343434);border:1px solid #1f1f1f;box-sizing:border-box;border-radius:2.5px;"></div>
<span style="left:705.7px;top:289.00px;font-size:9px;line-height:9px;color:#dcdcdc;transform:scaleX(1.0249);">Nur ausgewählte Objekte exportieren</span>
<div style="left:689.5px;top:299.9px;width:34.1px;height:21.4px;background:#333333;border:1px solid #242424;box-sizing:border-box;border-radius:3.5px;"></div>
<svg style="left:695.8px;top:302.8px;" width="21.7" height="15.4" viewBox="0 0 21.7 15.4"><defs><pattern id="ck2" width="7" height="7" patternUnits="userSpaceOnUse"><rect width="7" height="7" fill="#d2d2d2"/><rect width="3.5" height="3.5" fill="#ababab"/><rect x="3.5" y="3.5" width="3.5" height="3.5" fill="#ababab"/></pattern></defs><rect width="21.7" height="15.4" fill="url(#ck2)" rx="1.5"/><rect x="10.8" width="10.9" height="15.4" fill="#fafafa" rx="1.5"/><rect x="10.8" width="3" height="15.4" fill="#fafafa"/></svg>
<span style="left:728.9px;top:308.00px;font-size:9px;line-height:9px;color:#dcdcdc;transform:scaleX(1.0696);">Hintergrundfarbe</span>
<div style="left:464.8px;top:353.4px;width:264.6px;height:33.4px;background:#2a2a2a;border:1px solid #1f1f1f;box-sizing:border-box;border-radius:4px;"></div>
<span style="left:470.0px;top:367.00px;font-size:9px;line-height:9px;color:#e6e6e6;transform:scaleX(1.0038);">n halt nur noch Hubzilla auch als CMS/ProhibitionSign2.png</span>
<svg style="left:712px;top:364.5px;" width="13" height="11" viewBox="0 0 13 11"><path d="M1.2 2 H4.8 L6 3.2 H10.2 V5" fill="none" stroke="#eee" stroke-width="1.2"/><path d="M1.2 2 V9.8 H9.6 L11.8 5.2 H3.6 L1.4 9.6" fill="none" stroke="#eee" stroke-width="1.2" stroke-linejoin="round"/></svg>
<div style="left:732.8px;top:353.4px;width:105.7px;height:33.4px;background:#2f2f2f;border:1px solid #1f1f1f;box-sizing:border-box;border-radius:4px;"></div>
<span style="left:740.6px;top:367.00px;font-size:9px;line-height:9px;color:#dcdcdc;transform:scaleX(0.9878);">PNG (*.png)</span>
<svg style="left:822px;top:368px;" width="10" height="7" viewBox="0 0 10 7"><path d="M1.2 1.2 L4.4 4.4 L7.6 1.2" fill="none" stroke="#eee" stroke-width="1.5"/></svg>
<div style="left:841.7px;top:353.8px;width:22.7px;height:21.7px;background:#2f2f2f;border:1px solid #1f1f1f;box-sizing:border-box;border-radius:3px;"></div>
<svg style="left:847.5px;top:359.3px;" width="11.5" height="11" viewBox="0 0 11.5 11"><g transform="translate(5.5,5.2)"><circle r="3.5" fill="#f2f2f2"/><g fill="#f2f2f2"><rect x="-1" y="-5.3" width="2" height="2.4" transform="rotate(0)"/><rect x="-1" y="-5.3" width="2" height="2.4" transform="rotate(45)"/><rect x="-1" y="-5.3" width="2" height="2.4" transform="rotate(90)"/><rect x="-1" y="-5.3" width="2" height="2.4" transform="rotate(135)"/><rect x="-1" y="-5.3" width="2" height="2.4" transform="rotate(180)"/><rect x="-1" y="-5.3" width="2" height="2.4" transform="rotate(225)"/><rect x="-1" y="-5.3" width="2" height="2.4" transform="rotate(270)"/><rect x="-1" y="-5.3" width="2" height="2.4" transform="rotate(315)"/></g><circle r="1.5" fill="#2f2f2f"/></g></svg>
<div style="left:464.8px;top:391px;width:399.6px;height:21.8px;background:#313131;border:1px solid #232323;box-sizing:border-box;border-radius:3px;"></div>
<span style="left:640.5px;top:399.00px;font-size:9px;line-height:9px;color:#dcdcdc;transform:scaleX(1.0435);">Exportieren</span>
<div style="left:867.8px;top:46px;width:34.2px;height:375px;background:#343434;"></div>
<svg style="left:880px;top:54px;" width="13" height="13" viewBox="0 0 13 13"><path d="M1.5 1.5 H6.5 L9.5 4.5 V11.2 H1.5Z" fill="none" stroke="#f2f2f2" stroke-width="1.4" stroke-linejoin="round"/><circle cx="10.3" cy="1.8" r="1.6" fill="#1aa01a"/></svg>
<svg style="left:880px;top:77.5px;" width="13" height="13" viewBox="0 0 13 13"><path d="M1.2 2 H4.8 L6 3.2 H10.5 V5 M1.2 2 V10.8 H10.2 L12 5.6 H3.4 L1.3 10.6" fill="#f2f2f2" stroke="#f2f2f2" stroke-width="1" stroke-linejoin="round"/></svg>
<svg style="left:880px;top:102px;" width="13" height="13" viewBox="0 0 13 13"><path d="M6.5 0.8 V6" stroke="#1aa01a" stroke-width="1.6"/><path d="M3.8 4.2 L6.5 7.2 L9.2 4.2Z" fill="#1aa01a"/><path d="M1.5 7 H3.5 L4.5 8.3 H8.5 L9.5 7 H11.5 V11.8 H1.5Z" fill="#f2f2f2"/><rect x="4.4" y="9.6" width="4.2" height="0.9" fill="#333"/></svg>
<svg style="left:880px;top:126.5px;" width="13" height="13" viewBox="0 0 13 13"><rect x="3.5" y="1" width="6" height="3" fill="#ddd"/><rect x="1" y="4" width="11" height="5" rx="1" fill="#f2f2f2"/><rect x="3.5" y="8" width="6" height="3.5" fill="#ddd"/></svg>
<div style="left:875px;top:146.2px;width:23px;height:1.0px;background:#2d2d2d;"></div>
<svg style="left:880px;top:153.5px;" width="13" height="13" viewBox="0 0 13 13"><path d="M3 1.5 H7.5 L10.5 4.5 V11.2 H3 V9 M3 5.2 V3" fill="none" stroke="#f2f2f2" stroke-width="1.4" stroke-linejoin="round"/><path d="M0.8 7 H6" stroke="#1aa01a" stroke-width="1.5"/><path d="M5 5 L7.4 7 L5 9Z" fill="#1aa01a"/></svg>
<svg style="left:880px;top:177.5px;" width="13" height="13" viewBox="0 0 13 13"><path d="M1.5 1.5 H6 L9 4.5 V11.2 H1.5Z" fill="none" stroke="#f2f2f2" stroke-width="1.4" stroke-linejoin="round"/><path d="M6 7.2 H11" stroke="#1aa01a" stroke-width="1.5"/><path d="M10 5.2 L12.4 7.2 L10 9.2Z" fill="#1aa01a"/></svg>
<div style="left:875px;top:197px;width:23px;height:1px;background:#2d2d2d;"></div>
<svg style="left:880px;top:205.5px;" width="13" height="13" viewBox="0 0 13 13"><path d="M3 3.5 H7.5 A3 3 0 0 1 7.5 9.5 H5" fill="none" stroke="#7a7a7a" stroke-width="1.3"/><path d="M1 3.5 L3.8 1.2 V5.8Z" fill="#7a7a7a"/></svg>
<svg style="left:880px;top:230px;" width="13" height="13" viewBox="0 0 13 13"><path d="M10 3.5 H5.5 A3 3 0 0 0 5.5 9.5 H8" fill="none" stroke="#7a7a7a" stroke-width="1.3"/><path d="M12 3.5 L9.2 1.2 V5.8Z" fill="#7a7a7a"/></svg>
<div style="left:875px;top:249px;width:23px;height:1px;background:#2d2d2d;"></div>
<svg style="left:880px;top:256px;" width="13" height="13" viewBox="0 0 13 13"><rect x="1" y="1.2" width="7" height="7" fill="#f2f2f2" stroke="#333" stroke-width="0.6"/><rect x="4.4" y="4.4" width="7.3" height="7.3" fill="#f2f2f2" stroke="#333" stroke-width="1"/></svg>
<svg style="left:880px;top:280.5px;" width="13" height="13" viewBox="0 0 13 13"><circle cx="3.3" cy="9.3" r="2" fill="none" stroke="#f2f2f2" stroke-width="1.3"/><circle cx="9.7" cy="9.3" r="2" fill="none" stroke="#f2f2f2" stroke-width="1.3"/><path d="M4.5 7.7 L9.5 1 M8.5 7.7 L3.5 1" stroke="#f2f2f2" stroke-width="1.3"/></svg>
<svg style="left:880px;top:305.5px;" width="13" height="13" viewBox="0 0 13 13"><rect x="2" y="1.5" width="9" height="10.5" fill="#f2f2f2"/><rect x="3.5" y="3.2" width="6" height="7.5" fill="#555"/><rect x="4.5" y="0.8" width="4" height="2" fill="#f2f2f2"/><rect x="4.5" y="4" width="4" height="6" fill="#ddd"/></svg>
<div style="left:874.4px;top:327.6px;width:23.5px;height:17.9px;background:#333;border:1px solid #242424;box-sizing:border-box;border-radius:3px;"></div>
<svg style="left:882px;top:333.5px;" width="9" height="7" viewBox="0 0 9 7"><path d="M1.2 1.4 L4.4 4.6 L7.6 1.4" fill="none" stroke="#f0f0f0" stroke-width="1.5"/></svg>
<div style="left:442.8px;top:179.1px;width:5.9px;height:106.9px;background:#a4a4a4;border-radius:3px;"></div>
<div style="left:156px;top:410px;width:149px;height:6px;background:#a4a4a4;border-radius:3px;"></div>
<div style="left:444.3px;top:411.8px;width:2.6px;height:2.8px;background:#e8e8e8;border-radius:50%;"></div>
<svg style="left:340.3px;top:221.5px;" width="10" height="14" viewBox="0 0 10 14"><path d="M1 1 L1 10.5 L3.4 8.3 L5.2 12.2 L6.8 11.5 L5 7.7 L8.2 7.6Z" fill="#111" stroke="#eee" stroke-width="0.7"/></svg>
<svg style="left:441px;top:49px;" width="12" height="10" viewBox="0 0 12 10"><rect x="1" y="0.8" width="9.5" height="6.5" rx="1" fill="none" stroke="#eee" stroke-width="1.2"/><path d="M3 9 H8.5" stroke="#eee" stroke-width="1.2"/></svg>
<svg style="left:339px;top:53.5px;" width="8" height="7" viewBox="0 0 8 7"><path d="M1 0.5 L6.5 6.5 L3.6 6.5Z" fill="#f0f0f0"/><path d="M3.5 0 V6.5" stroke="#f0f0f0" stroke-width="1"/></svg>
<svg style="left:34px;top:219.5px;" width="4" height="7" viewBox="0 0 4 7"><path d="M0.6 0.5 L3.9 3.5 L0.6 6.5Z" fill="#f0f0f0"/></svg>
<div style="left:0px;top:417px;width:902px;height:4.5px;background:#333333;"></div>
<div style="left:0px;top:421.5px;width:902px;height:22.5px;background:#333333;"></div>
<div style="left:0.8px;top:421.7px;width:22.2px;height:22.3px;background:#ffffff;"></div>
<svg style="left:0.8px;top:421.7px;" width="22.2" height="22.3" viewBox="0 0 22.2 22.3"><path d="M2.2 2.2 L20 20.2 M20 2.2 L2.2 20.2" stroke="#d0203a" stroke-width="1.6"/></svg>
<div style="left:22.9px;top:421.6px;width:834.9px;height:22.4px;background:#2a2a2a;"></div>
<div style="left:23.4px;top:421.8px;width:14.7px;height:10.4px;background:#000000;"></div>
<div style="left:23.4px;top:432.9px;width:14.7px;height:11px;background:#552200;"></div>
<div style="left:39.1px;top:421.8px;width:14.7px;height:10.4px;background:#1a1a1a;"></div>
<div style="left:39.1px;top:432.9px;width:14.7px;height:11px;background:#803300;"></div>
<div style="left:54.8px;top:421.8px;width:14.9px;height:10.4px;background:#333333;"></div>
<div style="left:54.8px;top:432.9px;width:14.9px;height:11px;background:#aa4400;"></div>
<div style="left:70.7px;top:421.8px;width:14.9px;height:10.4px;background:#4d4d4d;"></div>
<div style="left:70.7px;top:432.9px;width:14.9px;height:11px;background:#d45500;"></div>
<div style="left:86.6px;top:421.8px;width:14.7px;height:10.4px;background:#666666;"></div>
<div style="left:86.6px;top:432.9px;width:14.7px;height:11px;background:#ff6600;"></div>
<div style="left:102.3px;top:421.8px;width:15.0px;height:10.4px;background:#808080;"></div>
<div style="left:102.3px;top:432.9px;width:15.0px;height:11px;background:#ff7f2a;"></div>
<div style="left:118.3px;top:421.8px;width:14.8px;height:10.4px;background:#999999;"></div>
<div style="left:118.3px;top:432.9px;width:14.8px;height:11px;background:#ff9955;"></div>
<div style="left:134.1px;top:421.8px;width:15.1px;height:10.4px;background:#b3b3b3;"></div>
<div style="left:134.1px;top:432.9px;width:15.1px;height:11px;background:#ffb380;"></div>
<div style="left:150.2px;top:421.8px;width:14.8px;height:10.4px;background:#cccccc;"></div>
<div style="left:150.2px;top:432.9px;width:14.8px;height:11px;background:#ffccaa;"></div>
<div style="left:166.0px;top:421.8px;width:14.7px;height:10.4px;background:#e6e6e6;"></div>
<div style="left:166.0px;top:432.9px;width:14.7px;height:11px;background:#ffe6d5;"></div>
<div style="left:181.7px;top:421.8px;width:15.0px;height:10.4px;background:#ececec;"></div>
<div style="left:181.7px;top:432.9px;width:15.0px;height:11px;background:#28170b;"></div>
<div style="left:197.7px;top:421.8px;width:14.7px;height:10.4px;background:#f2f2f2;"></div>
<div style="left:197.7px;top:432.9px;width:14.7px;height:11px;background:#502d16;"></div>
<div style="left:213.4px;top:421.8px;width:14.7px;height:10.4px;background:#f9f9f9;"></div>
<div style="left:213.4px;top:432.9px;width:14.7px;height:11px;background:#784421;"></div>
<div style="left:229.1px;top:421.8px;width:15.0px;height:10.4px;background:#ffffff;"></div>
<div style="left:229.1px;top:432.9px;width:15.0px;height:11px;background:#a05a2c;"></div>
<div style="left:245.1px;top:421.8px;width:14.9px;height:10.4px;background:#800000;"></div>
<div style="left:245.1px;top:432.9px;width:14.9px;height:11px;background:#c87137;"></div>
<div style="left:261.0px;top:421.8px;width:14.9px;height:10.4px;background:#ff0000;"></div>
<div style="left:261.0px;top:432.9px;width:14.9px;height:11px;background:#d38d5f;"></div>
<div style="left:276.9px;top:421.8px;width:14.9px;height:10.4px;background:#808000;"></div>
<div style="left:276.9px;top:432.9px;width:14.9px;height:11px;background:#deaa87;"></div>
<div style="left:292.8px;top:421.8px;width:14.6px;height:10.4px;background:#ffff00;"></div>
<div style="left:292.8px;top:432.9px;width:14.6px;height:11px;background:#e9c6af;"></div>
<div style="left:308.4px;top:421.8px;width:14.7px;height:10.4px;background:#008000;"></div>
<div style="left:308.4px;top:432.9px;width:14.7px;height:11px;background:#f4e3d7;"></div>
<div style="left:324.1px;top:421.8px;width:14.8px;height:10.4px;background:#00ff00;"></div>
<div style="left:324.1px;top:432.9px;width:14.8px;height:11px;background:#241f1c;"></div>
<div style="left:339.9px;top:421.8px;width:15.1px;height:10.4px;background:#008080;"></div>
<div style="left:339.9px;top:432.9px;width:15.1px;height:11px;background:#483e37;"></div>
<div style="left:356.0px;top:421.8px;width:15.0px;height:10.4px;background:#00ffff;"></div>
<div style="left:356.0px;top:432.9px;width:15.0px;height:11px;background:#6c5d53;"></div>
<div style="left:372.0px;top:421.8px;width:14.7px;height:10.4px;background:#000080;"></div>
<div style="left:372.0px;top:432.9px;width:14.7px;height:11px;background:#917c6f;"></div>
<div style="left:387.7px;top:421.8px;width:14.2px;height:10.4px;background:#0000ff;"></div>
<div style="left:387.7px;top:432.9px;width:14.2px;height:11px;background:#ac9d93;"></div>
<div style="left:402.9px;top:421.8px;width:14.0px;height:10.4px;background:#800080;"></div>
<div style="left:402.9px;top:432.9px;width:14.0px;height:11px;background:#c8beb7;"></div>
<div style="left:417.9px;top:421.8px;width:14.6px;height:10.4px;background:#ff00ff;"></div>
<div style="left:417.9px;top:432.9px;width:14.6px;height:11px;background:#e3dedb;"></div>
<div style="left:433.5px;top:421.8px;width:13.9px;height:10.4px;background:#2b0000;"></div>
<div style="left:433.5px;top:432.9px;width:13.9px;height:11px;background:#2b2200;"></div>
<div style="left:448.4px;top:421.8px;width:14.4px;height:10.4px;background:#550000;"></div>
<div style="left:448.4px;top:432.9px;width:14.4px;height:11px;background:#554400;"></div>
<div style="left:463.8px;top:421.8px;width:14.3px;height:10.4px;background:#800000;"></div>
<div style="left:463.8px;top:432.9px;width:14.3px;height:11px;background:#806600;"></div>
<div style="left:479.1px;top:421.8px;width:14.3px;height:10.4px;background:#aa0000;"></div>
<div style="left:479.1px;top:432.9px;width:14.3px;height:11px;background:#aa8800;"></div>
<div style="left:494.4px;top:421.8px;width:14.0px;height:10.4px;background:#d40000;"></div>
<div style="left:494.4px;top:432.9px;width:14.0px;height:11px;background:#d4aa00;"></div>
<div style="left:509.4px;top:421.8px;width:14.2px;height:10.4px;background:#ff0000;"></div>
<div style="left:509.4px;top:432.9px;width:14.2px;height:11px;background:#ffcc00;"></div>
<div style="left:524.6px;top:421.8px;width:14.4px;height:10.4px;background:#ff2a2a;"></div>
<div style="left:524.6px;top:432.9px;width:14.4px;height:11px;background:#ffd42a;"></div>
<div style="left:540.0px;top:421.8px;width:14.2px;height:10.4px;background:#ff5555;"></div>
<div style="left:540.0px;top:432.9px;width:14.2px;height:11px;background:#ffdd55;"></div>
<div style="left:555.2px;top:421.8px;width:14.0px;height:10.4px;background:#ff8080;"></div>
<div style="left:555.2px;top:432.9px;width:14.0px;height:11px;background:#ffe680;"></div>
<div style="left:570.2px;top:421.8px;width:14.2px;height:10.4px;background:#ffaaaa;"></div>
<div style="left:570.2px;top:432.9px;width:14.2px;height:11px;background:#ffeeaa;"></div>
<div style="left:585.4px;top:421.8px;width:14.3px;height:10.4px;background:#ffd5d5;"></div>
<div style="left:585.4px;top:432.9px;width:14.3px;height:11px;background:#fff6d5;"></div>
<div style="left:600.7px;top:421.8px;width:14.0px;height:10.4px;background:#280b0b;"></div>
<div style="left:600.7px;top:432.9px;width:14.0px;height:11px;background:#28220b;"></div>
<div style="left:615.7px;top:421.8px;width:14.3px;height:10.4px;background:#501616;"></div>
<div style="left:615.7px;top:432.9px;width:14.3px;height:11px;background:#504416;"></div>
<div style="left:631.0px;top:421.8px;width:14.3px;height:10.4px;background:#782121;"></div>
<div style="left:631.0px;top:432.9px;width:14.3px;height:11px;background:#786721;"></div>
<div style="left:646.3px;top:421.8px;width:14.0px;height:10.4px;background:#a02c2c;"></div>
<div style="left:646.3px;top:432.9px;width:14.0px;height:11px;background:#a0892c;"></div>
<div style="left:661.3px;top:421.8px;width:13.9px;height:10.4px;background:#c83737;"></div>
<div style="left:661.3px;top:432.9px;width:13.9px;height:11px;background:#c8ab37;"></div>
<div style="left:676.2px;top:421.8px;width:14.3px;height:10.4px;background:#d35f5f;"></div>
<div style="left:676.2px;top:432.9px;width:14.3px;height:11px;background:#d3bc5f;"></div>
<div style="left:691.5px;top:421.8px;width:14.3px;height:10.4px;background:#de8787;"></div>
<div style="left:691.5px;top:432.9px;width:14.3px;height:11px;background:#decd87;"></div>
<div style="left:706.8px;top:421.8px;width:13.9px;height:10.4px;background:#e9afaf;"></div>
<div style="left:706.8px;top:432.9px;width:13.9px;height:11px;background:#e9ddaf;"></div>
<div style="left:721.7px;top:421.8px;width:14.7px;height:10.4px;background:#f4d7d7;"></div>
<div style="left:721.7px;top:432.9px;width:14.7px;height:11px;background:#f4eed7;"></div>
<div style="left:737.4px;top:421.8px;width:14.2px;height:10.4px;background:#241c1c;"></div>
<div style="left:737.4px;top:432.9px;width:14.2px;height:11px;background:#24221c;"></div>
<div style="left:752.6px;top:421.8px;width:13.9px;height:10.4px;background:#483737;"></div>
<div style="left:752.6px;top:432.9px;width:13.9px;height:11px;background:#484537;"></div>
<div style="left:767.5px;top:421.8px;width:14.0px;height:10.4px;background:#6c5353;"></div>
<div style="left:767.5px;top:432.9px;width:14.0px;height:11px;background:#6c6753;"></div>
<div style="left:782.5px;top:421.8px;width:14.2px;height:10.4px;background:#916f6f;"></div>
<div style="left:782.5px;top:432.9px;width:14.2px;height:11px;background:#918a6f;"></div>
<div style="left:797.7px;top:421.8px;width:14.3px;height:10.4px;background:#ac9393;"></div>
<div style="left:797.7px;top:432.9px;width:14.3px;height:11px;background:#aca793;"></div>
<div style="left:813.0px;top:421.8px;width:14.1px;height:10.4px;background:#c8b7b7;"></div>
<div style="left:813.0px;top:432.9px;width:14.1px;height:11px;background:#c8c4b7;"></div>
<div style="left:828.1px;top:421.8px;width:14.1px;height:10.4px;background:#e3dbdb;"></div>
<div style="left:828.1px;top:432.9px;width:14.1px;height:11px;background:#e3e2db;"></div>
<div style="left:843.2px;top:421.8px;width:14.1px;height:10.4px;background:#2b1100;"></div>
<div style="left:843.2px;top:432.9px;width:14.1px;height:11px;background:#222b00;"></div>
<svg style="left:860px;top:428px;" width="11" height="8" viewBox="0 0 11 8"><path d="M1.5 6 L5.3 2 L9.1 6" fill="none" stroke="#7c7c7c" stroke-width="1.3"/></svg>
<svg style="left:875px;top:428px;" width="11" height="8" viewBox="0 0 11 8"><path d="M1.5 1.5 L5.3 5.5 L9.1 1.5" fill="none" stroke="#eeeeee" stroke-width="1.5"/></svg>
<svg style="left:889px;top:427px;" width="12" height="12" viewBox="0 0 12 12"><rect x="1" y="1.3" width="9.5" height="1.6" fill="#eee"/><rect x="1" y="5" width="9.5" height="1.6" fill="#eee"/><rect x="1" y="8.7" width="9.5" height="1.6" fill="#eee"/></svg>
<div style="left:0px;top:444px;width:902px;height:26px;background:#333333;"></div>
<span style="left:0.7px;top:448.00px;font-size:9px;line-height:9px;color:#dedede;transform:scaleX(0.9781);">Füllung:</span>
<span style="left:2.0px;top:460.00px;font-size:9px;line-height:9px;color:#dedede;transform:scaleX(1.0345);">Kontur:</span>
<span style="left:54.5px;top:448.00px;font-size:9px;line-height:9px;color:#dedede;transform:scaleX(0.9800);">N/V</span>
<span style="left:54.5px;top:460.00px;font-size:9px;line-height:9px;color:#dedede;transform:scaleX(0.9800);">N/V</span>
<span style="left:111.0px;top:454.00px;font-size:9px;line-height:9px;color:#dedede;transform:scaleX(0.9053);">O:</span>
<div style="left:123.5px;top:445.6px;width:47.3px;height:23.4px;background:#2f2f2f;border:1px solid #262626;box-sizing:border-box;border-radius:4px;"></div>
<div style="left:149px;top:446.6px;width:1px;height:21.4px;background:#2a2a2a;"></div>
<div style="left:159.9px;top:446.6px;width:1px;height:21.4px;background:#2a2a2a;"></div>
<span style="left:128.5px;top:454.00px;font-size:9px;line-height:9px;color:#8a8a8a;transform:scaleX(1.0000);">100</span>
<div style="left:150.8px;top:456.8px;width:7.2px;height:1.0px;background:#6a6a6a;"></div>
<div style="left:161.5px;top:456.8px;width:7.7px;height:1.0px;background:#6a6a6a;"></div>
<div style="left:164.9px;top:453.3px;width:1.0px;height:8.0px;background:#6a6a6a;"></div>
<div style="left:178.2px;top:451px;width:2.6px;height:12.6px;background:#f2f2f2;"></div>
<span style="left:184.41626794258372px;top:454.00px;font-size:9px;line-height:9px;color:#dedede;font-style:italic;transform:scaleX(1.0813);">[root]</span>
<svg style="left:219.5px;top:452px;" width="12" height="11" viewBox="0 0 12 11"><path d="M1 5.5 Q5.8 0.8 10.6 5.5 Q5.8 10 1 5.5Z" fill="none" stroke="#9a9a9a" stroke-width="1.1"/><circle cx="5.8" cy="5.6" r="1.6" fill="#9a9a9a"/><path d="M2.3 1.5 L3.3 3 M5.8 0.3 V2 M9.3 1.5 L8.3 3" stroke="#9a9a9a" stroke-width="0.9"/></svg>
<svg style="left:244.5px;top:452px;" width="11" height="11" viewBox="0 0 11 11"><path d="M5.5 4.5 V3.2 A2.2 2.2 0 0 1 9.9 3.2 V4.2" fill="none" stroke="#8a8a8a" stroke-width="1.3"/><rect x="1" y="4.8" width="7.8" height="5.5" rx="0.4" fill="#8a8a8a"/></svg>
<span style="left:265.7px;top:448.00px;font-size:9px;line-height:9px;color:#dedede;transform:scaleX(1.0321);">Keine Objekte ausgewählt. Umschalt+Klick, Alt+Mausrad über Objekten, oder</span>
<span style="left:265.7px;top:458.00px;font-size:9px;line-height:9px;color:#dedede;transform:scaleX(1.0072);">Rahmen um Objekte ziehen zum Auswählen.</span>
<svg style="left:620px;top:453px;" width="8" height="9" viewBox="0 0 8 9"><path d="M5.8 1 L2 4.5 L5.8 8" fill="none" stroke="#9a9a9a" stroke-width="1.2"/></svg>
<div style="left:636.5px;top:445.6px;width:23.5px;height:23.4px;background:#313131;border:1px solid #262626;box-sizing:border-box;border-radius:4px;"></div>
<svg style="left:644px;top:455px;" width="10" height="6" viewBox="0 0 10 6"><path d="M1.2 1 L4.6 4.4 L8 1" fill="none" stroke="#a8a8a8" stroke-width="1.3"/></svg>
<svg style="left:669px;top:453px;" width="8" height="9" viewBox="0 0 8 9"><path d="M2 1 L5.8 4.5 L2 8" fill="none" stroke="#9a9a9a" stroke-width="1.2"/></svg>
<div style="left:683.5px;top:446px;width:1px;height:23px;background:#2b2b2b;"></div>
<span style="left:688.8px;top:448.00px;font-size:9px;line-height:9px;color:#dedede;transform:scaleX(0.8706);">X:</span>
<span style="left:688.8px;top:460.00px;font-size:9px;line-height:9px;color:#dedede;transform:scaleX(0.9250);">Y:</span>
<span style="left:705.4px;top:448.00px;font-size:9px;line-height:9px;color:#dedede;transform:scaleX(1.0291);">223,32</span>
<span style="left:705.4px;top:460.00px;font-size:9px;line-height:9px;color:#dedede;transform:scaleX(1.0291);">129,50</span>
<span style="left:742.3px;top:455.00px;font-size:9px;line-height:9px;color:#dedede;transform:scaleX(0.9250);">Z:</span>
<div style="left:753.7px;top:445px;width:57.8px;height:24.5px;background:#2f2f2f;border:1px solid #262626;box-sizing:border-box;border-radius:4px;"></div>
<div style="left:789.6px;top:446px;width:1px;height:22.5px;background:#2a2a2a;"></div>
<div style="left:800.6px;top:446px;width:1px;height:22.5px;background:#2a2a2a;"></div>
<span style="left:759.8px;top:454.00px;font-size:9px;line-height:9px;color:#dedede;transform:scaleX(1.0043);">182%</span>
<div style="left:791px;top:456.5px;width:7.9px;height:1.6px;background:#f0f0f0;"></div>
<div style="left:801.9px;top:456.5px;width:8.3px;height:1.6px;background:#f0f0f0;"></div>
<div style="left:805.25px;top:453.2px;width:1.6px;height:8.2px;background:#f0f0f0;"></div>
<span style="left:818.8px;top:455.00px;font-size:9px;line-height:9px;color:#dedede;transform:scaleX(0.9667);">D:</span>
<div style="left:831.7px;top:445px;width:63.2px;height:24.5px;background:#2f2f2f;border:1px solid #262626;box-sizing:border-box;border-radius:4px;"></div>
<div style="left:872.7px;top:446px;width:1px;height:22.5px;background:#2a2a2a;"></div>
<div style="left:884px;top:446px;width:1px;height:22.5px;background:#2a2a2a;"></div>
<span style="left:841.3px;top:454.00px;font-size:9px;line-height:9px;color:#dedede;transform:scaleX(1.0237);">0,00°</span>
<div style="left:873.9px;top:456.5px;width:9.1px;height:1.6px;background:#f0f0f0;"></div>
<div style="left:884.8px;top:456.5px;width:9.2px;height:1.6px;background:#f0f0f0;"></div>
<div style="left:888.6px;top:452.6px;width:1.6px;height:9.3px;background:#f0f0f0;"></div>
</body></html>
